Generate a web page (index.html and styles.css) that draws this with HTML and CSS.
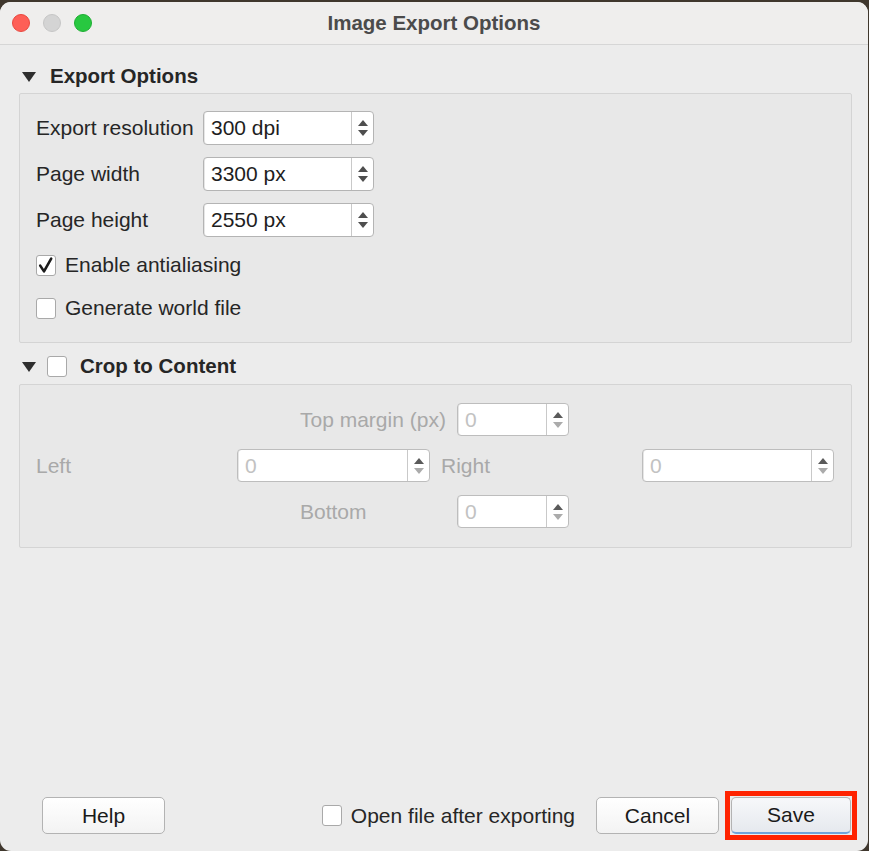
FILE: index.html
```html
<!DOCTYPE html>
<html>
<head>
<meta charset="utf-8">
<title>Image Export Options</title>
<link rel="stylesheet" href="styles.css">
</head>
<body>
<div class="window">
  <div class="titlebar">
    <div class="lights">
      <span class="light red"></span>
      <span class="light gray"></span>
      <span class="light green"></span>
    </div>
    <div class="title">Image Export Options</div>
    <div class="title-spacer"></div>
  </div>

  <div class="main">
    <div class="section-head">
      <span class="disclosure"></span>
      <span class="head-text">Export Options</span>
    </div>
    <div class="group g1">
      <div class="form-row">
        <span class="label">Export resolution</span>
        <div class="spin w-main"><span class="spin-value">300 dpi</span><span class="spin-arrows"><span class="arr up"></span><span class="arr down"></span></span></div>
      </div>
      <div class="form-row">
        <span class="label">Page width</span>
        <div class="spin w-main"><span class="spin-value">3300 px</span><span class="spin-arrows"><span class="arr up"></span><span class="arr down"></span></span></div>
      </div>
      <div class="form-row">
        <span class="label">Page height</span>
        <div class="spin w-main"><span class="spin-value">2550 px</span><span class="spin-arrows"><span class="arr up"></span><span class="arr down"></span></span></div>
      </div>
      <div class="check-row first">
        <span class="checkbox"><svg viewBox="0 0 20 20" width="20" height="20"><path d="M4.2 10.6 L8 16.4 L15.2 3.6" fill="none" stroke="#1c1c1c" stroke-width="2.6" stroke-linecap="round" stroke-linejoin="round"/></svg></span>
        <span class="check-text">Enable antialiasing</span>
      </div>
      <div class="check-row second">
        <span class="checkbox"></span>
        <span class="check-text">Generate world file</span>
      </div>
    </div>

    <div class="section-head h2">
      <span class="disclosure"></span>
      <span class="checkbox head-check"></span>
      <span class="head-text">Crop to Content</span>
    </div>
    <div class="group g2">
      <div class="crop-row centered">
        <span class="clabel cl-center">Top margin (px)</span>
        <div class="spin dis w-small"><span class="spin-value">0</span><span class="spin-arrows"><span class="arr up"></span><span class="arr down"></span></span></div>
      </div>
      <div class="crop-row">
        <span class="clabel cl-side">Left</span>
        <div class="spin dis w-left"><span class="spin-value">0</span><span class="spin-arrows"><span class="arr up"></span><span class="arr down"></span></span></div>
        <span class="clabel cl-side cl-right">Right</span>
        <div class="spin dis w-right"><span class="spin-value">0</span><span class="spin-arrows"><span class="arr up"></span><span class="arr down"></span></span></div>
      </div>
      <div class="crop-row centered">
        <span class="clabel cl-center">Bottom</span>
        <div class="spin dis w-small"><span class="spin-value">0</span><span class="spin-arrows"><span class="arr up"></span><span class="arr down"></span></span></div>
      </div>
    </div>
  </div>

  <div class="footer">
    <button class="btn">Help</button>
    <label class="open-after">
      <span class="checkbox"></span>
      <span class="check-text">Open file after exporting</span>
    </label>
    <button class="btn">Cancel</button>
    <span class="save-frame"><button class="btn save">Save</button></span>
  </div>
</div>
</body>
</html>
```
FILE: styles.css
```css
* { box-sizing: border-box; }

html, body {
  margin: 0;
  padding: 0;
}

body {
  background: #3f372d;
  width: 869px;
  height: 851px;
  overflow: hidden;
  font-family: "Liberation Sans", Arial, sans-serif;
  font-size: 21px;
  color: #262626;
}

.window {
  margin-top: 2px;
  width: 868px;
  height: 849px;
  border-radius: 11px;
  overflow: hidden;
  background: #ececec;
  display: flex;
  flex-direction: column;
}

/* ---------- title bar ---------- */
.titlebar {
  height: 43px;
  flex: none;
  background: #efeeed;
  border-bottom: 1px solid #d6d6d6;
  display: grid;
  grid-template-columns: 1fr auto 1fr;
  align-items: center;
}

.lights {
  display: flex;
  gap: 13px;
  padding-left: 12px;
}

.light {
  width: 18px;
  height: 18px;
  border-radius: 50%;
  display: block;
}
.light.red { background: #fe5f57; border: 1px solid #e9483f; }
.light.gray { background: #d4d4d4; border: 1px solid #c6c6c6; }
.light.green { background: #28c840; border: 1px solid #1eae33; }

.title {
  font-weight: bold;
  font-size: 20.5px;
  color: #4b4b4b;
}

/* ---------- main ---------- */
.main {
  padding: 17px 16px 0 19px;
}

.section-head {
  height: 28px;
  display: flex;
  align-items: center;
  padding-left: 3px;
}

.section-head.h2 {
  margin-top: 9px;
}

.disclosure {
  width: 0;
  height: 0;
  border-left: 7.5px solid transparent;
  border-right: 7.5px solid transparent;
  border-top: 10px solid #2e2e2e;
  margin-right: 14px;
  margin-top: 1px;
}

.h2 .disclosure {
  margin-right: 11px;
}

.head-check {
  margin-right: 13px;
}

.head-text {
  font-weight: bold;
  font-size: 20.5px;
  color: #262626;
}

.group {
  border: 1px solid #d4d4d4;
  background: #e8e8e8;
  border-radius: 2px;
  display: flex;
  flex-direction: column;
}

.g1 {
  margin-top: 3px;
  padding: 17px 16px 22px 16px;
  gap: 12px;
}

.g2 {
  margin-top: 4px;
  padding: 18px 16px 19px 16px;
  gap: 13px;
}

/* ---------- rows ---------- */
.form-row {
  height: 34px;
  display: flex;
  align-items: center;
}

.label {
  width: 167px;
  flex: none;
}

.check-row {
  height: 24px;
  display: flex;
  align-items: center;
  gap: 9px;
}
.check-row.first { margin-top: 4px; }
.check-row.second { margin-top: 7px; }

.checkbox {
  width: 20px;
  height: 21px;
  flex: none;
  background: #fff;
  border: 1px solid #a9a9a9;
  border-radius: 3px;
  display: flex;
  align-items: center;
  justify-content: center;
  overflow: hidden;
}

.checkbox svg {
  display: block;
  flex: none;
}

/* ---------- spin boxes ---------- */
.spin {
  height: 34px;
  display: flex;
  background: #fff;
  border: 1px solid #b4b4b4;
  border-radius: 4px;
  box-shadow: inset 1px 0 0 #e6e6e6;
  flex: none;
}

.w-main { width: 171px; }
.w-small { width: 112px; height: 33px; }
.w-left { width: 193px; height: 33px; }
.w-right { width: 192px; height: 33px; }

.spin-value {
  flex: 1;
  display: flex;
  align-items: center;
  padding-left: 7px;
  color: #1e1e1e;
}

.spin-arrows {
  width: 22px;
  flex: none;
  border-left: 1px solid #c9c9c9;
  display: flex;
  flex-direction: column;
  align-items: center;
  justify-content: center;
  gap: 4px;
}

.arr {
  width: 0;
  height: 0;
  border-left: 5px solid transparent;
  border-right: 5px solid transparent;
}
.arr.up { border-bottom: 6px solid #4e4e4e; }
.arr.down { border-top: 6px solid #4e4e4e; }

.spin.dis {
  border-color: #bdbdbd;
}
.spin.dis .spin-value { color: #c2c2c2; }
.spin.dis .arr.up { border-bottom-color: #5a5a5a; }
.spin.dis .arr.down { border-top-color: #ababab; }

/* ---------- crop rows ---------- */
.crop-row {
  height: 33px;
  display: flex;
  align-items: center;
}

.crop-row.centered {
  padding-left: 264px;
}

.clabel {
  color: #a9a9a9;
  flex: none;
}

.cl-center { width: 157px; }
.cl-side { width: 201px; }
.cl-right { margin-left: 11px; }

/* ---------- footer ---------- */
.footer {
  margin-top: auto;
  display: flex;
  align-items: center;
  padding: 0 11px 11px 42px;
}

.btn {
  width: 123px;
  height: 37px;
  font-family: "Liberation Sans", Arial, sans-serif;
  font-size: 21px;
  color: #1a1a1a;
  background: linear-gradient(#ffffff, #f3f3f3);
  border: 1px solid #b3b3b3;
  border-radius: 5px;
  padding: 0;
  flex: none;
}

.open-after {
  margin-left: auto;
  margin-right: 21px;
  display: flex;
  align-items: center;
  gap: 9px;
}

.save-frame {
  display: flex;
  flex: none;
  margin-left: 6px;
  border: 5px solid #ff2300;
  padding: 1px;
}

.btn.save {
  width: 120px;
  background: linear-gradient(#f7f8fa, #e6e9ee);
  border-bottom: 2px solid #6fa4da;
}
```
